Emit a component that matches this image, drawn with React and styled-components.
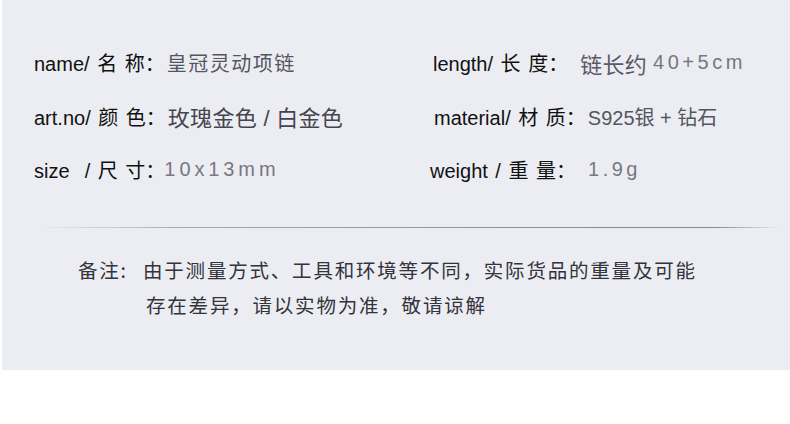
import React from 'react';
import styled, { createGlobalStyle } from 'styled-components';

const GlobalStyle = createGlobalStyle`
  html, body {
    margin: 0;
    padding: 0;
    background: #fff;
  }
  body {
    font-family: "Liberation Sans", "Noto Sans CJK SC", sans-serif;
  }
`;

const specs = [
  [
    { label: 'name/ 名 称：', value: '皇冠灵动项链', tone: '#55555f', size: 20, spacing: 1.5, gap: 2 },
    { label: 'art.no/ 颜 色：', value: '玫瑰金色 / 白金色', tone: '#45454f', size: 22, spacing: 0.3, gap: 2 },
    { label: 'size  / 尺 寸：', value: '10x13mm', tone: '#777780', size: 20, spacing: 3.9, gap: -1 },
  ],
  [
    { label: 'length/ 长 度：', value: '链长约', extra: '40+5cm', tone: '#5a5a64', size: 22, spacing: 0.3, gap: 12, shift: 1 },
    { label: 'material/ 材 质：', value: 'S925银 + 钻石', tone: '#55555f', size: 20, spacing: 0, gap: 2, shift: 2 },
    { label: 'weight / 重 量：', value: '1.9g', tone: '#777780', size: 20, spacing: 3.5, gap: 12, shift: -2 },
  ],
];

const Panel = styled.section`
  margin-left: 2px;
  background: #ecedf2;
  padding: 36px 0 48px;
  height: 286px;
`;

const SpecGrid = styled.div`
  display: grid;
  grid-template-columns: 398px 1fr;
  padding-left: 32px;
`;

const Column = styled.div`
  display: flex;
  flex-direction: column;
`;

const Row = styled.div`
  display: flex;
  align-items: center;
  height: 53.5px;
  margin-left: ${(p) => p.$shift || 0}px;
  white-space: pre;
`;

const Label = styled.span`
  font-size: 20px;
  word-spacing: 2px;
  color: #111;
`;

const Value = styled.span`
  margin-left: ${(p) => p.$gap}px;
  font-size: ${(p) => p.$size}px;
  letter-spacing: ${(p) => p.$spacing}px;
  color: ${(p) => p.$tone};
`;

const Extra = styled.span`
  margin-left: 6px;
  font-size: 20px;
  letter-spacing: 3.5px;
  color: #777780;
`;

const Divider = styled.hr`
  border: 0;
  height: 1px;
  margin: 30px 0 24px;
  background: linear-gradient(
    to right,
    rgba(138, 138, 150, 0) 34px,
    rgba(138, 138, 150, 0.7) 180px,
    #8a8a96 600px,
    #8a8a96 715px,
    rgba(138, 138, 150, 0) 778px
  );
`;

const Note = styled.div`
  display: grid;
  grid-template-columns: 65px 1fr;
  padding-left: 76px;
  font-family: "Noto Sans CJK SC", sans-serif;
  font-size: 19.5px;
  letter-spacing: 1.8px;
  line-height: 35px;
  color: #33333b;
`;

const NoteLines = styled.div`
  display: flex;
  flex-direction: column;
`;

const Indent = styled.span`
  padding-left: 3px;
`;

export default function App() {
  return (
    <>
      <GlobalStyle />
      <Panel>
        <SpecGrid>
          {specs.map((col, i) => (
            <Column key={i}>
              {col.map((s) => (
                <Row key={s.label} $shift={s.shift}>
                  <Label>{s.label}</Label>
                  <Value $gap={s.gap} $size={s.size} $spacing={s.spacing} $tone={s.tone}>
                    {s.value}
                  </Value>
                  {s.extra && <Extra>{s.extra}</Extra>}
                </Row>
              ))}
            </Column>
          ))}
        </SpecGrid>
        <Divider />
        <Note>
          <span>备注:</span>
          <NoteLines>
            <span>由于测量方式、工具和环境等不同，实际货品的重量及可能</span>
            <Indent>存在差异，请以实物为准，敬请谅解</Indent>
          </NoteLines>
        </Note>
      </Panel>
    </>
  );
}
